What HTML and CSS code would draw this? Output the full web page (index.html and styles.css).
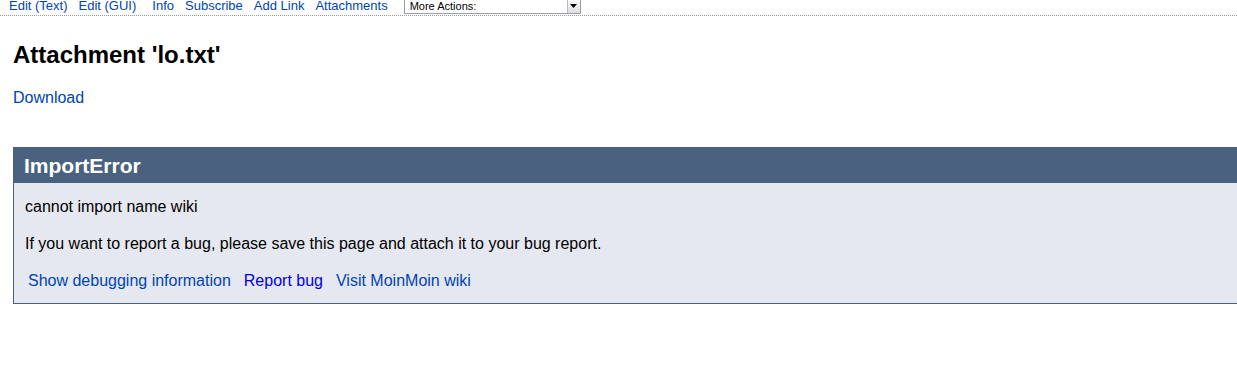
FILE: index.html
```html
<!DOCTYPE html>
<html>
<head>
<meta charset="utf-8">
<link rel="stylesheet" href="styles.css">
</head>
<body>
<div class="nav">
  <a href="#">Edit (Text)</a>
  <a href="#">Edit (GUI)</a>
  <a href="#" class="gap">Info</a>
  <a href="#">Subscribe</a>
  <a href="#">Add Link</a>
  <a href="#">Attachments</a>
  <div class="select"><span>More Actions:</span><span class="arrow"><svg width="7" height="4" viewBox="0 0 7 4"><path d="M0 0h7L3.5 4z" fill="#000"/></svg></span></div>
</div>
<div class="content">
  <h1>Attachment 'lo.txt'</h1>
  <p class="dl"><a href="#">Download</a></p>
  <div class="error">
    <div class="error-head">ImportError</div>
    <div class="error-body">
      <p>cannot import name wiki</p>
      <p>If you want to report a bug, please save this page and attach it to your bug report.</p>
      <div class="links">
        <a href="#">Show debugging information</a>
        <a href="#" class="bright">Report bug</a>
        <a href="#">Visit MoinMoin wiki</a>
      </div>
    </div>
  </div>
</div>
</body>
</html>
```
FILE: styles.css
```css
html, body { margin: 0; padding: 0; background: #fff; }
body { font-family: "Liberation Sans", Arial, sans-serif; color: #000; overflow: hidden; }
a { color: #0044b3; text-decoration: none; }
.nav {
  display: flex;
  align-items: flex-start;
  height: 16px;
  border-bottom: 1px dotted #999;
  font-size: 13px;
  line-height: 13px;
  padding-left: 9px;
  margin-top: -1px;
}
.nav a { margin-right: 11px; }
.nav a.gap { margin-left: 5px; }
.select {
  margin-left: 5px;
  width: 175px;
  height: 14px;
  border: 1px solid #9aa0aa;
  border-top: none;
  box-sizing: content-box;
  display: flex;
  justify-content: space-between;
  font-size: 11px;
  line-height: 14px;
  background: #fff;
}
.select span:first-child { padding-left: 5px; }
.select .arrow {
  width: 12px;
  border-left: 1px solid #bbb;
  background: linear-gradient(#fff, #ddd);
  display: flex;
  align-items: center;
  justify-content: center;
}
.content { padding-left: 13px; }
h1 { margin: 24px 0 0; font-size: 24px; line-height: 30px; font-weight: bold; }
.dl { margin: 19px 0 0; font-size: 16px; line-height: 18px; }
.error {
  margin-top: 40px;
  margin-right: -20px;
  border: 1px solid #4a6280;
  background: #e5e8f0;
}
.error-head {
  background: #4a6280;
  color: #fff;
  font-weight: bold;
  font-size: 21px;
  line-height: 35px;
  padding-left: 10px;
}
.error-body { padding: 14px 11px 13px 11px; font-size: 16px; line-height: 19px; }
.error-body p { margin: 0 0 18px; }
.links { padding-left: 3px; font-size: 16px; display: flex; gap: 13px; }
.links a.bright { color: #0000e6; }
```
